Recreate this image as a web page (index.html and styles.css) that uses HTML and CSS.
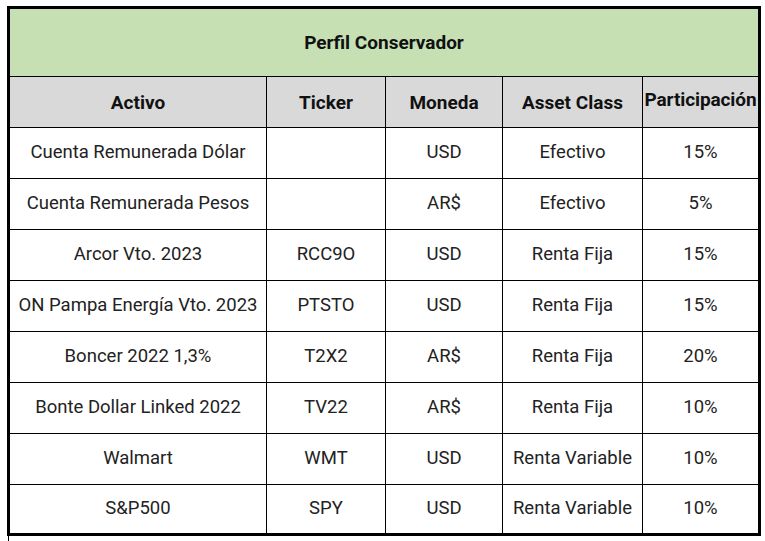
FILE: index.html
```html
<!DOCTYPE html>
<html lang="es">
<head>
<meta charset="utf-8">
<title>Perfil Conservador</title>
<link rel="stylesheet" href="styles.css">
</head>
<body>
<div class="sheet">
  <div class="title">Perfil Conservador</div>
  <div class="head">Activo</div>
  <div class="head">Ticker</div>
  <div class="head">Moneda</div>
  <div class="head">Asset Class</div>
  <div class="head part">Participación</div>

  <div class="cell">Cuenta Remunerada Dólar</div>
  <div class="cell"></div>
  <div class="cell">USD</div>
  <div class="cell">Efectivo</div>
  <div class="cell">15%</div>

  <div class="cell">Cuenta Remunerada Pesos</div>
  <div class="cell"></div>
  <div class="cell">AR$</div>
  <div class="cell">Efectivo</div>
  <div class="cell">5%</div>

  <div class="cell">Arcor Vto. 2023</div>
  <div class="cell">RCC9O</div>
  <div class="cell">USD</div>
  <div class="cell">Renta Fija</div>
  <div class="cell">15%</div>

  <div class="cell">ON Pampa Energía Vto. 2023</div>
  <div class="cell">PTSTO</div>
  <div class="cell">USD</div>
  <div class="cell">Renta Fija</div>
  <div class="cell">15%</div>

  <div class="cell">Boncer 2022 1,3%</div>
  <div class="cell">T2X2</div>
  <div class="cell">AR$</div>
  <div class="cell">Renta Fija</div>
  <div class="cell">20%</div>

  <div class="cell">Bonte Dollar Linked 2022</div>
  <div class="cell">TV22</div>
  <div class="cell">AR$</div>
  <div class="cell">Renta Fija</div>
  <div class="cell">10%</div>

  <div class="cell">Walmart</div>
  <div class="cell">WMT</div>
  <div class="cell">USD</div>
  <div class="cell">Renta Variable</div>
  <div class="cell">10%</div>

  <div class="cell">S&amp;P500</div>
  <div class="cell">SPY</div>
  <div class="cell">USD</div>
  <div class="cell">Renta Variable</div>
  <div class="cell">10%</div>
</div>
<div class="below"></div>
</body>
</html>
```

FILE: styles.css
```css
html, body {
  margin: 0;
  padding: 0;
  background: #ffffff;
}

body {
  padding: 6px 0 0 7px;
  font-family: Roboto, "Liberation Sans", sans-serif;
  color: #222;
}

.sheet {
  display: grid;
  grid-template-columns: 256px 118px 116px 139px 115px;
  grid-template-rows: 67px repeat(8, 50px) 48px;
  gap: 1px;
  background: #000;
  border: 3px solid #000;
  width: max-content;
}

.title {
  grid-column: 1 / -1;
  background: #c6e0b4;
  display: flex;
  align-items: center;
  justify-content: center;
  font-weight: 700;
  font-size: 19px;
  color: #111;
}

.head {
  background: #d9d9d9;
  display: flex;
  align-items: center;
  justify-content: center;
  font-weight: 700;
  font-size: 19px;
  color: #111;
}

.head.part {
  align-items: flex-start;
  padding-top: 11px;
  letter-spacing: -0.1px;
}

.cell {
  background: #fff;
  display: flex;
  align-items: center;
  justify-content: center;
  padding-bottom: 3px;
  font-size: 18.5px;
  white-space: nowrap;
}

.below {
  margin-left: 1px;
  height: 10px;
  border-left: 1px solid #000;
  width: 0;
}
```
